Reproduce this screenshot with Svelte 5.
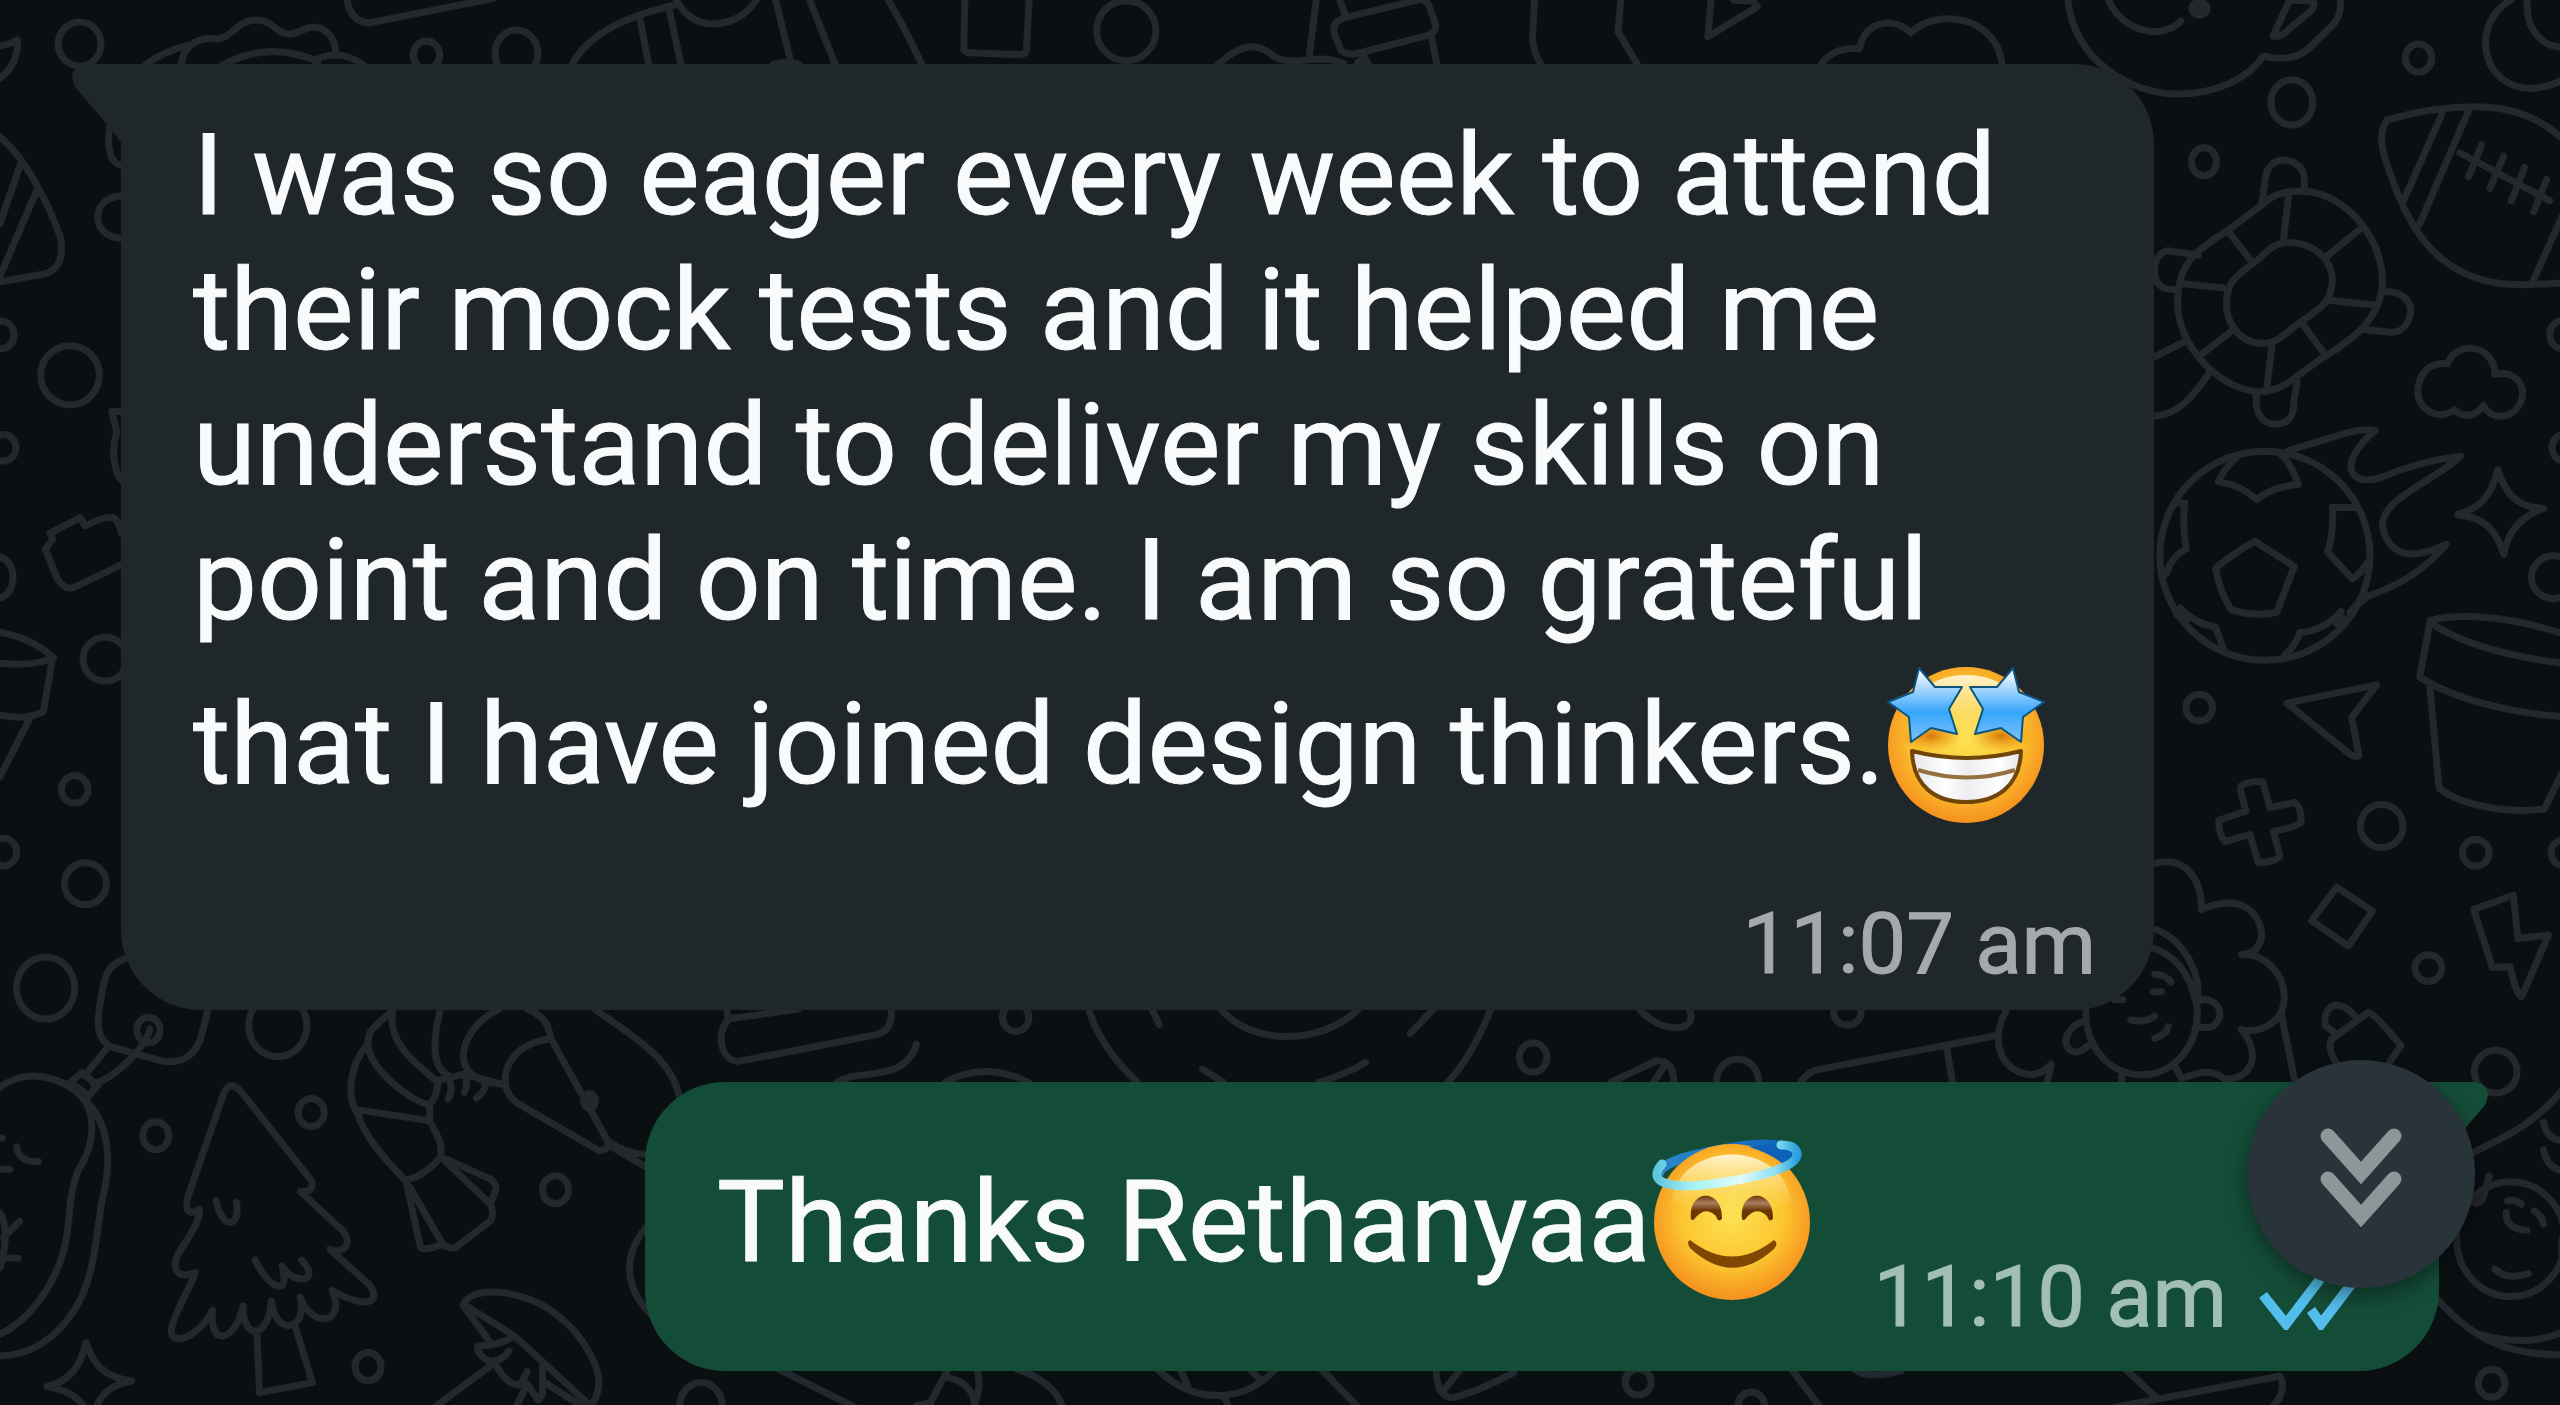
<script lang="ts">
  const incoming =
    'I was so eager every week to attend their mock tests and it helped me understand to deliver my skills on point and on time. I am so grateful that I have joined design thinkers.';
  const outgoing = 'Thanks Rethanyaa';
</script>

<main class="chat">
  <svg class="wallpaper" viewBox="0 0 2560 1405" preserveAspectRatio="xMinYMin slice" aria-hidden="true">
    <!-- top edge, left half -->
    <g transform="scale(.5485 .3333)">
      <path d="M0 138Q20 130 32 120Q34 190 0 235M265 195Q295 155 345 135M330 195Q335 120 385 115C420 128 430 60 465 60C500 60 500 100 527 102C550 100 560 70 585 85Q610 105 613 165M405 195Q490 120 580 185M575 178Q620 145 662 195" />
      <path d="M632 0Q640 70 675 68L900-5M1042 195Q1080 70 1230 15M1165 50L1182 195M1220 35L1241 195M1232 0Q1255 70 1298 72Q1350 70 1378 0M1413 0L1440 180M1475 0L1522 195" />
      <ellipse cx="145" cy="132" rx="39" ry="66" /><ellipse cx="777" cy="165" rx="24" ry="42" /><ellipse cx="941" cy="160" rx="39" ry="70" />
      <ellipse class="dot" cx="1432" cy="195" rx="32" ry="18" />
    </g>
    <!-- top edge, middle -->
    <g transform="translate(860 0) scale(.5485 .3333)">
      <path d="M50 0Q70 50 112 195M190 0L188 148Q190 158 200 158L290 164Q302 162 302 150L307 0M650 195C695 125 725 130 750 165Q770 188 800 182Q850 168 880 190M830 0L817 175M873 0L882 40M882 53L1018-1Q1032 0 1036 20L1048 75Q1048 95 1035 105L900 162Q885 165 875 150L862 95Q860 65 882 53M905 190L918 170L925 195M1040 110L1050 195M1228 0L1224 110Q1224 150 1240 195M1385 0L1380 95L1416 195" />
      <ellipse cx="484" cy="92" rx="54" ry="90" />
    </g>
    <!-- top right: cup, football, turtle, cloud -->
    <g transform="translate(1700 0) scale(.5485 .3333)">
      <path d="M18 0L12 110L102 20L95 4L60 0M218 195Q240 140 288 146C300 60 350 50 382 98C430 20 540 50 548 195M668 0C680 180 780 282 868 282C940 282 1000 230 1024 168Q1080 190 1110 140L1150 75Q1166 50 1165 0M742 0C760 70 800 95 825 95Q860 92 874 62M1072 0L1042 108Q1055 115 1070 88L1112 30Q1122 10 1110 3L1072 0" />
      <ellipse class="dot" cx="908" cy="26" rx="20" ry="30" />
      <path d="M1475 0C1400 70 1420 265 1512 265Q1545 262 1568 240M1505 0C1500 100 1540 142 1568 142M1250 360C1310 330 1370 320 1415 320C1480 322 1530 355 1568 415M1250 360C1235 390 1238 430 1245 470C1270 600 1300 720 1360 790C1430 870 1500 855 1568 848M1350 340L1280 600M1398 332L1308 675M1568 650L1515 845M1382 458L1546 602M1422 434L1398 530M1462 468L1437 565M1500 502L1476 602M1540 538L1517 635" />
      <ellipse cx="1076" cy="307" rx="38" ry="68" /><ellipse cx="916" cy="485" rx="23" ry="42" /><ellipse cx="1307" cy="174" rx="24" ry="42" />
      <ellipse cx="1568" cy="1003" rx="22" ry="42" /><ellipse cx="1575" cy="1342" rx="25" ry="42" />
      <path d="M1025 610C1050 570 1080 575 1096 573C1180 580 1250 730 1240 870C1230 960 1195 1010 1130 1075C1080 1130 1060 1175 1015 1175C940 1165 865 1030 868 900C870 790 900 750 960 690ZM1060 728C1110 720 1150 770 1150 845C1145 920 1120 930 1080 980C1060 1005 1050 1030 1020 1030C980 1025 955 970 957 900C960 830 985 820 1020 770Q1040 735 1060 728M1070 590L1060 728M1198 690L1140 768M1232 915L1142 900M1137 1065L1095 970M1030 1170L1040 1030M907 1068L970 988M875 850L960 865M963 700L1005 788" />
      <path d="M1022 605L1028 530C1035 470 1075 465 1095 510Q1102 535 1097 575M1245 875C1280 870 1295 910 1292 940C1288 975 1275 998 1255 996L1208 988M1012 1178C1008 1220 1015 1270 1045 1272C1075 1270 1080 1240 1080 1200L1086 1145M905 765L850 752C835 755 826 780 826 810C826 845 835 870 862 868M880 1025L826 1070M925 1120C900 1180 870 1245 826 1247" />
      <path d="M1360 1090C1375 1020 1445 1030 1446 1122C1480 1110 1500 1150 1496 1190C1485 1260 1440 1265 1425 1215C1410 1255 1385 1250 1372 1228C1345 1265 1300 1230 1306 1160Q1315 1085 1360 1090" />
    </g>
    <!-- right side: ball, star, pot, small shapes, girl -->
    <g transform="translate(2060 400) scale(.3333 .4464)">
      <ellipse cx="610" cy="348" rx="315" ry="234" />
      <path d="M680 113L860 72Q910 62 940 68C890 100 865 130 868 155C880 185 930 180 960 172Q1080 135 1196 125C1120 180 960 220 962 280C980 350 1050 360 1154 322C1080 390 990 420 920 438Q885 455 865 475M525 127Q490 150 470 182Q540 190 585 222Q630 195 710 188Q695 150 660 122M580 316L698 372L645 475Q570 485 508 468Q475 430 462 376Q520 340 580 316M812 240H885M812 240Q818 290 798 340L872 400Q895 390 915 365M345 230H370Q362 280 374 332Q330 350 314 388M355 465Q400 500 462 508L488 560M345 480L372 492M838 472Q790 515 715 520Q700 550 670 570M825 500L845 488" />
      <path d="M1308 156C1330 205 1360 240 1446 242C1380 260 1340 290 1326 345C1305 295 1270 260 1188 256C1260 240 1290 210 1308 156M1110 492C1200 475 1350 485 1500 522M1110 500C1200 545 1350 575 1500 588M1106 492L1074 620C1180 670 1350 700 1500 708M1105 645L1132 868C1200 910 1350 925 1448 915L1500 835M676 678L945 637L870 710L892 795Q885 800 870 795ZM540 862Q575 850 604 855L625 912L700 900Q722 915 718 945Q705 955 635 965L655 1020Q640 1035 590 1035L565 972L490 988Q470 970 472 940L553 920L536 870M825 1090L932 1143L860 1222L750 1165ZM1236 1140L1355 1108L1368 1205L1460 1197L1380 1335Q1365 1335 1345 1268L1292 1270Z" />
      <path d="M825 1420L790 1398C785 1350 840 1335 885 1385M810 1430L920 1370Q935 1370 1018 1445L985 1480M810 1430Q795 1450 825 1485" />
      <ellipse cx="413" cy="688" rx="40" ry="30" /><ellipse cx="960" cy="953" rx="64" ry="48" /><ellipse cx="1242" cy="1013" rx="40" ry="30" /><ellipse cx="1505" cy="1013" rx="37" ry="29" /><ellipse cx="1100" cy="1271" rx="40" ry="30" /><ellipse cx="1302" cy="1503" rx="64" ry="48" /><ellipse cx="1475" cy="396" rx="66" ry="48" />
      <path d="M285 1036C370 1020 420 1070 420 1140C540 1100 600 1150 600 1200Q590 1240 540 1240C620 1240 670 1290 668 1340C665 1390 600 1420 538 1408C600 1460 575 1520 490 1520C440 1490 400 1510 360 1518L340 1490M658 1370L700 1525M285 1185C370 1210 425 1290 405 1350C420 1440 340 1510 240 1510C130 1510 60 1430 75 1350M270 1225C340 1240 385 1285 400 1340M410 1345C440 1335 478 1350 475 1378C460 1410 440 1405 405 1402M70 1390C30 1395 0 1430 20 1450C45 1470 70 1450 80 1445M280 1285Q310 1285 328 1302M275 1324H300M160 1342H185M208 1387Q250 1395 280 1378M280 1428Q315 1420 320 1402M180 1515V1530" />
    </g>
    <!-- left edge -->
    <g transform="translate(0 100) scale(.3333 .5102)">
      <path d="M0 72C80 115 150 210 182 270C195 320 160 340 120 342L0 356M60 128L0 242M108 180L0 345M362 128C325 120 320 85 330 50M362 188C270 190 270 270 362 270M335 610H365M335 610L350 650C330 690 345 730 365 745M150 848L240 818L255 834Q330 810 345 820Q358 830 365 850M150 848L158 860L136 880L170 935Q190 960 220 955L365 910M0 1042Q100 1055 160 1092Q100 1110 0 1103M158 1092L130 1198Q80 1215 0 1205M90 1210L0 1325" />
      <ellipse cx="5" cy="460" rx="37" ry="27" /><ellipse cx="210" cy="539" rx="88" ry="58" /><ellipse cx="10" cy="681" rx="38" ry="26" /><ellipse cx="-5" cy="935" rx="44" ry="40" /><ellipse cx="315" cy="1095" rx="66" ry="43" /><ellipse cx="224" cy="1350" rx="40" ry="27" /><ellipse cx="10" cy="1473" rx="40" ry="27" /><ellipse cx="256" cy="1535" rx="63" ry="41" />
    </g>
    <!-- bottom left: pear, tree, shrimp, mushroom -->
    <g transform="translate(0 900) scale(.4337 .3333)">
      <ellipse cx="105" cy="262" rx="67" ry="93" /><ellipse cx="640" cy="375" rx="67" ry="93" /><ellipse cx="359" cy="705" rx="30" ry="42" /><ellipse cx="717" cy="635" rx="30" ry="42" /><ellipse cx="1280" cy="867" rx="30" ry="42" /><ellipse cx="848" cy="1397" rx="30" ry="42" /><ellipse cx="342" cy="388" rx="27" ry="38" />
      <path d="M295 172C240 190 240 240 232 300C220 380 225 420 260 440L370 480C430 495 455 450 465 400L480 325M248 440L195 525M345 385C340 430 270 530 215 550M190 515L225 555L205 585L162 545Z" />
      <path d="M0 560C60 500 140 525 190 590C225 650 215 740 180 810C150 900 170 1000 130 1110C100 1200 50 1270 0 1300M190 590C260 670 255 800 235 900C220 1010 220 1130 170 1230C130 1310 70 1365 0 1365M38 738Q45 785 88 782M0 712H5M0 805L22 805M0 935Q25 990 0 1100M45 962L8 1010M0 1070L42 1072" />
      <path d="M515 580Q530 530 560 580L718 840Q725 875 692 872L790 990C815 1030 790 1060 760 1045L850 1150C880 1200 850 1230 765 1168C800 1265 720 1290 692 1188C710 1290 635 1310 625 1200C620 1310 560 1325 560 1215C545 1320 480 1345 490 1228C450 1320 390 1335 395 1285C400 1240 435 1170 450 1115C400 1140 395 1090 415 1050C440 1000 460 960 460 925C430 950 425 920 435 880ZM498 900C510 985 555 985 545 905M588 1078C620 1165 670 1190 650 1095C670 1150 745 1150 695 1078M592 1300L598 1475L720 1445L680 1275M198 1325C215 1390 240 1430 303 1440C250 1455 235 1480 222 1515M198 1325C185 1400 160 1440 108 1457Q170 1470 192 1515" />
      <path d="M905 330C840 400 850 400 848 430C800 500 800 600 825 640C840 710 890 780 935 840M905 325C890 430 960 490 1010 545M1015 325C1000 400 990 500 1035 525M1150 325C1060 380 1020 540 1155 550M848 430C850 500 940 600 990 612Q1010 580 1008 540M990 612V660C1010 710 1020 730 1015 768M830 628L990 660M1015 768C990 810 960 830 935 838L968 1035Q970 1055 1020 1030L945 860M1020 1030Q1035 1045 1050 1040L1130 960Q1140 940 1130 910L1015 768L1130 835Q1145 850 1142 870L1130 910M1005 540L1070 520L1155 550M1035 535Q1045 570 1032 595M1070 520Q1080 550 1070 575M1118 545Q1120 570 1098 592" />
      <path d="M1215 325C1260 350 1265 380 1268 410L1400 720Q1410 745 1380 750L1190 605C1140 560 1160 430 1268 415M1370 325C1450 400 1550 470 1565 590M1360 625L1400 720Q1440 760 1495 762M1400 730L1490 800M1495 970C1440 1050 1430 1150 1500 1240" />
      <ellipse class="dot" cx="1358" cy="600" rx="22" ry="32" />
      <path d="M1068 1210C1090 1150 1200 1170 1265 1225C1350 1300 1395 1420 1375 1480Q1370 1510 1355 1508L1185 1305ZM1068 1215L1130 1325M1185 1305Q1150 1335 1100 1335Q1100 1365 1130 1382Q1160 1380 1172 1350M1140 1385Q1170 1460 1200 1450L1215 1412M1140 1385L1000 1520M1250 1385V1480L1240 1497L1215 1450L1190 1515M1250 1440L1340 1515" />
    </g>
    <!-- strip between the bubbles and below the second, left -->
    <g transform="translate(600 960) scale(.574 .3333)">
      <path d="M220 145L222 175L345 145M222 178C200 220 210 300 240 302L480 222Q510 210 506 145M412 365C450 320 530 370 550 250M600 365Q670 300 745 365M850 145Q870 260 935 365M960 145L973 192M1080 145C1130 250 1250 260 1320 145M1450 145L1410 218M1550 145Q1520 280 1475 365M1048 325L1085 365M1332 305Q1300 340 1250 365" />
      <ellipse cx="723" cy="170" rx="23" ry="42" /><ellipse cx="175" cy="1335" rx="37" ry="70" />
      <path d="M305 1220L450 1345M605 1225L570 1340M605 1250C640 1260 655 1310 650 1345M655 1225C665 1270 655 1310 650 1340M550 1335L575 1325M725 1225Q790 1260 805 1340M970 1225C1030 1330 1120 1330 1175 1225M1010 1225L1025 1285M1130 1225L1145 1250M1085 1305L1095 1340M1255 1225L1320 1340M1455 1225Q1455 1310 1485 1310Q1530 1290 1590 1235M1495 1230L1465 1295" />
    </g>
    <circle cx="1637" cy="1381" r="13" /><circle cx="1750" cy="1404" r="13" />
    <path d="M1790 1368L1818 1405" />
    <!-- strip between the bubbles, right -->
    <g transform="translate(1400 960) scale(.574 .3333)">
      <ellipse cx="230" cy="290" rx="24" ry="44" /><ellipse cx="777" cy="155" rx="24" ry="38" /><ellipse cx="586" cy="365" rx="37" ry="70" />
      <path d="M415 145C450 220 520 220 502 145M365 365L445 300Q475 300 475 365M460 310L440 365M695 365Q710 330 730 325L1035 225M950 260L960 365M1055 145C1020 250 1050 340 1100 342Q1120 335 1132 310L1125 365" />
    </g>
    <!-- bottom right -->
    <g transform="translate(1840 1020) scale(.4592 .3333)">
      <ellipse cx="1415" cy="1087" rx="29" ry="42" /><ellipse cx="1457" cy="655" rx="118" ry="172" />
      <path d="M1568 210C1500 320 1440 350 1375 395M1528 305Q1535 355 1568 360M1528 388Q1535 440 1568 450M1410 465C1400 510 1400 545 1380 548M1450 540Q1470 535 1480 550M1508 570Q1525 585 1528 610M1447 575Q1445 625 1492 628M1422 745Q1450 780 1495 758M1568 655V700M1300 840C1380 960 1450 1000 1568 1002M1390 940Q1490 980 1568 935M30 1047Q60 1075 130 1050M620 1047L685 1130M590 1160L955 1065Q970 1110 940 1155" />
    </g>
  </svg>

  <article class="bubble incoming">
    <svg class="tail" viewBox="0 0 50 80" aria-hidden="true"><path d="M50 0H12Q-6 5 3 23L38 64Q45 73 50 80Z" /></svg>
    <p class="text">{incoming}<svg class="emoji" viewBox="0 0 160 160" role="img" aria-label="Star-struck face">
        <defs>
          <radialGradient id="face" cx=".5" cy=".45" r=".55"><stop offset="0" stop-color="#fce254" /><stop offset=".6" stop-color="#fcc62f" /><stop offset="1" stop-color="#f5901e" /></radialGradient>
          <linearGradient id="shine" x2="0" y2="1"><stop stop-color="#fff4cf" /><stop offset="1" stop-color="#fbdf70" stop-opacity="0" /></linearGradient>
          <linearGradient id="star" x2="0" y2="1"><stop offset=".1" stop-color="#e8f1ff" /><stop offset=".6" stop-color="#37a6fb" /><stop offset="1" stop-color="#7cc4fc" /></linearGradient>
          <linearGradient id="teeth"><stop stop-color="#e6e4e8" /><stop offset=".3" stop-color="#fff" /><stop offset=".5" stop-color="#eeecef" /><stop offset=".8" stop-color="#fff" /><stop offset="1" stop-color="#e6e4e8" /></linearGradient>
          <radialGradient id="socket"><stop stop-color="#d87908" /><stop offset="1" stop-color="#f0a21c" stop-opacity="0" /></radialGradient>
        </defs>
        <circle cx="79" cy="81" r="78" fill="url(#face)" />
        <ellipse cx="79" cy="43" rx="52" ry="32" fill="url(#shine)" />
        <ellipse cx="44" cy="72" rx="32" ry="16" fill="url(#socket)" /><ellipse cx="114" cy="72" rx="32" ry="16" fill="url(#socket)" />
        <g fill="url(#star)" stroke="#0b5580" stroke-width="2" stroke-linejoin="round">
          <path d="M32 4L48 23H75L62 45L70 70L44 64L24 78L22 53L1 38L26 28Z" />
          <path d="M126 4L110 23H83L96 45L88 70L114 64L134 78L136 53L157 38L132 28Z" />
        </g>
        <path d="M25 87Q80 101 134 87C133 122 110 138 79 138S26 122 25 87Z" fill="url(#teeth)" stroke="#70450a" stroke-width="4" stroke-linejoin="round" />
        <path d="M31 106Q80 121 128 106" fill="none" stroke="#94713e" stroke-width="4" />
      </svg></p>
    <footer class="meta"><time datetime="11:07">11:07 am</time></footer>
  </article>

  <article class="bubble outgoing">
    <svg class="tail" viewBox="0 0 50 80" aria-hidden="true"><path d="M0 0H38Q56 5 47 23L12 64Q5 73 0 80Z" /></svg>
    <p class="text">{outgoing}<svg class="emoji" viewBox="0 0 160 160" role="img" aria-label="Smiling face with halo">
        <defs>
          <linearGradient id="haloBack"><stop stop-color="#2b87c9" /><stop offset="1" stop-color="#0d62b8" /></linearGradient>
          <linearGradient id="haloFront"><stop stop-color="#5fc6e0" /><stop offset=".25" stop-color="#a5f2f2" /><stop offset=".6" stop-color="#e0fbfb" /><stop offset=".85" stop-color="#8bdff0" /><stop offset="1" stop-color="#2ba0e0" /></linearGradient>
          <linearGradient id="eye" x2="0" y2="1"><stop stop-color="#6b3703" /><stop offset=".3" stop-color="#a97f62" /><stop offset=".6" stop-color="#6b3703" /></linearGradient>
        </defs>
        <path d="M6 34C4 22 32 14 72 7S141 1 141 13" fill="none" stroke="url(#haloBack)" stroke-width="10" />
        <circle cx="79" cy="80" r="78" fill="url(#face)" />
        <path d="M18 62C24-3 132-5 138 62Q79 75 18 62" fill="url(#shine)" />
        <path d="M96 5C122 1 141 2 141 13Q140 18 132 24Q120 12 96 5Z" fill="#0d62b8" />
        <path d="M9 22C-8 42 20 48 66 41S146 24 144 11Q142 3 128 3" fill="none" stroke="url(#haloFront)" stroke-width="9" stroke-linecap="round" />
        <g fill="url(#eye)"><path d="M38 77C35 46 70 46 69 77Q65 81 63 74Q53 64 43 75Q40 80 38 77Z" /><path d="M89 77C86 46 121 46 120 77Q116 81 114 74Q104 64 94 75Q91 80 89 77Z" /></g>
        <path d="M37 98Q79 131 121 98Q126 101 121 107Q79 145 37 106Q33 100 37 98Z" fill="#7f4604" />
      </svg></p>
    <footer class="meta">
      <time datetime="11:10">11:10 am</time>
      <svg class="ticks" viewBox="0 0 112 66" role="img" aria-label="Read"><path d="M4 31L27 60L68 6M52 46L62 60L103 6" /></svg>
    </footer>
  </article>

  <button class="jump" type="button" aria-label="Scroll to latest message">
    <svg viewBox="0 0 90 120" aria-hidden="true"><path d="M12 14L45 51L78 14M12 57L45 94L78 57" /></svg>
  </button>
</main>

<style>
  :global(body) {
    margin: 0;
    background: #0a0f12;
  }
  .chat {
    position: relative;
    display: flex;
    flex-direction: column;
    gap: 72px;
    box-sizing: border-box;
    min-height: 100vh;
    padding: 64px 121px 35px;
    overflow: hidden;
    font-family: Roboto, 'Noto Sans', sans-serif;
    font-kerning: normal;
    color: #f9fafc;
  }
  .wallpaper {
    position: absolute;
    inset: 0;
    width: 100%;
    height: 100%;
    fill: none;
    stroke: #23282c;
    stroke-width: 7;
    stroke-linecap: round;
    stroke-linejoin: round;
  }
  .wallpaper path,
  .wallpaper ellipse {
    vector-effect: non-scaling-stroke;
  }
  .wallpaper .dot {
    fill: #23282c;
    stroke: none;
  }
  .bubble {
    position: relative;
    box-sizing: border-box;
    border-radius: 80px;
  }
  .incoming {
    margin-right: 285px;
    padding: 44px 58px 6px 72px;
    border-top-left-radius: 0;
    background: #20272a;
  }
  .outgoing {
    display: flex;
    justify-content: space-between;
    align-items: flex-end;
    margin-left: 524px;
    padding: 60px 68px 14px 72px;
    border-top-right-radius: 0;
    background: #144d37;
  }
  .tail {
    position: absolute;
    top: 0;
    width: 50px;
    height: 80px;
  }
  .incoming .tail {
    right: 100%;
    margin-right: -1px;
    fill: #20272a;
  }
  .outgoing .tail {
    left: 100%;
    margin-left: -1px;
    fill: #144d37;
  }
  .text {
    margin: 0;
    font-size: 114px;
    line-height: 135px;
    -webkit-text-stroke: 1px currentColor;
  }
  .emoji {
    width: 160px;
    height: 160px;
    margin-left: 2px;
    overflow: visible;
    vertical-align: -41px;
  }
  .incoming .emoji {
    margin-top: 16px;
  }
  .outgoing .text {
    padding-bottom: 55px;
  }
  .meta {
    display: flex;
    justify-content: flex-end;
    align-items: center;
    gap: 32px;
    font-size: 85px;
    line-height: 120px;
    color: #a5a9ab;
    -webkit-text-stroke: 1px currentColor;
  }
  .incoming .meta {
    margin-top: 60px;
  }
  .outgoing .meta {
    color: #a1bfb4;
  }
  .ticks {
    width: 112px;
    height: 66px;
    fill: none;
    stroke: #53bdeb;
    stroke-width: 10;
  }
  .jump {
    position: absolute;
    right: 85px;
    bottom: 118px;
    display: grid;
    place-items: center;
    width: 228px;
    height: 228px;
    padding: 0;
    border: 0;
    border-radius: 50%;
    background: #28333a;
    box-shadow: 0 8px 20px rgb(0 0 0 / 40%);
  }
  .jump svg {
    width: 90px;
    height: 120px;
    margin-top: 16px;
    fill: none;
    stroke: #8e9699;
    stroke-width: 15;
    stroke-linecap: round;
  }
</style>
